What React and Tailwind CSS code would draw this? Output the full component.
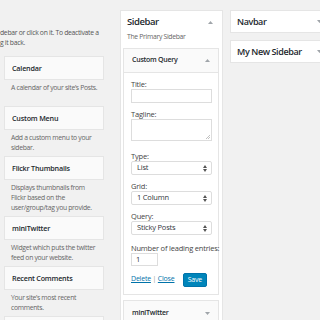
import React from "react";

function Up() {
  return (
    <svg width="5" height="3" viewBox="0 0 5 3" className="shrink-0">
      <path d="M0 3 L2.5 0 L5 3 Z" fill="#a0a5aa" />
    </svg>
  );
}
function Down() {
  return (
    <svg width="5" height="3" viewBox="0 0 5 3" className="shrink-0">
      <path d="M0 0 L2.5 3 L5 0 Z" fill="#a0a5aa" />
    </svg>
  );
}
function SelArrows() {
  return (
    <svg width="4" height="7" viewBox="0 0 4 7" className="shrink-0">
      <path d="M0 3 L2 0 L4 3 Z" fill="#555" />
      <path d="M0 4 L2 7 L4 4 Z" fill="#555" />
    </svg>
  );
}

const avail = [
  { t: "Calendar", d: ["A calendar of your site\u2019s Posts."] },
  { t: "Custom Menu", d: ["Add a custom menu to your", "sidebar."] },
  { t: "Flickr Thumbnails", d: ["Displays thumbnails from", "Flickr based on the", "user/group/tag you provide."] },
  { t: "miniTwitter", d: ["Widget which puts the twitter", "feed on your website."] },
  { t: "Recent Comments", d: ["Your site\u2019s most recent", "comments."] },
  { t: "", d: [""] },
];

function Select({ value }) {
  return (
    <div className="h-[14px] w-[81px] bg-white border border-[#ddd] rounded-[2px] flex items-center justify-between pl-[5px] pr-[4px] text-[7.5px] tracking-[-0.2px] text-[#32373c]">
      <span>{value}</span>
      <SelArrows />
    </div>
  );
}

export default function App() {
  return (
    <div className="w-[320px] h-[320px] overflow-hidden bg-[#f1f1f1] flex font-['Open_Sans',sans-serif] text-[#444]">
      {/* Available widgets */}
      <div className="w-[120px] shrink-0 flex flex-col pt-[28px]">
        <div className="text-[6.8px] tracking-[-0.3px] leading-[10px] text-[#555] whitespace-nowrap">
          <div>debar or click on it. To deactivate a</div>
          <div>g it back.</div>
        </div>
        <div className="mt-[8px] ml-[4px] w-[100px] flex flex-col">
          {avail.map((w, idx) => (
            <div key={idx} className="flex flex-col">
              <div className="h-[24px] bg-[#fafafa] border border-[#e5e5e5] flex items-center pl-[7px] text-[7.2px] tracking-[-0.2px] font-semibold text-[#23282d]">
                {w.t}
              </div>
              <div className="mt-[3px] mb-[3px] min-h-[20px] pl-[7px] text-[6.8px] tracking-[-0.3px] leading-[10px] text-[#666] whitespace-nowrap">
                {w.d.map((l, i) => (
                  <div key={i}>{l}</div>
                ))}
              </div>
            </div>
          ))}
        </div>
      </div>

      {/* Sidebar panel */}
      <div className="w-[103px] shrink-0 mt-[10px] h-[330px] bg-white border border-[#e5e5e5] flex flex-col">
        <div className="flex items-center justify-between pl-[6px] pr-[9px] pt-[4px] h-[18px]">
          <span className="text-[9.5px] tracking-[-0.45px] font-semibold text-[#23282d] leading-[14px]">Sidebar</span>
          <Up />
        </div>
        <div className="pl-[6px] mt-[3px] text-[6.8px] tracking-[-0.3px] leading-[10px] text-[#666]">The Primary Sidebar</div>
        <div className="mt-[6px] ml-[2px] w-[96px] border border-[#e5e5e5] flex flex-col">
          <div className="h-[24px] bg-[#fafafa] border-b border-[#e5e5e5] flex items-center justify-between pl-[8px] pr-[8px]">
            <span className="text-[7px] tracking-[-0.25px] font-semibold text-[#23282d]">Custom Query</span>
            <Up />
          </div>
          <div className="bg-white pl-[7px] pr-[6px] pt-[6px] pb-[7px] text-[7.5px] tracking-[-0.2px] text-[#444] flex flex-col">
            <div className="leading-[10px]">Title:</div>
            <div className="h-[14px] w-[81px] border border-[#ddd] bg-white" />
            <div className="mt-[6px] leading-[10px]">Tagline:</div>
            <div className="relative h-[22px] w-[81px] border border-[#ddd] bg-white">
              <svg width="4" height="4" viewBox="0 0 4 4" className="absolute right-[1px] bottom-[1px]">
                <path d="M4 0 L0 4 M4 2 L2 4" stroke="#999" strokeWidth="0.6" />
              </svg>
            </div>
            <div className="mt-[10px] leading-[10px]">Type:</div>
            <Select value="List" />
            <div className="mt-[6px] leading-[10px]">Grid:</div>
            <Select value="1 Column" />
            <div className="mt-[6px] leading-[10px]">Query:</div>
            <Select value="Sticky Posts" />
            <div className="mt-[8px] leading-[10px] whitespace-nowrap">Number of leading entries:</div>
            <div className="h-[13px] w-[27px] border border-[#ddd] bg-white flex items-center pl-[4px] text-[7.5px] text-[#32373c]">1</div>
            <div className="mt-[7px] flex items-center justify-between pr-[5px]">
              <span className="text-[7px] tracking-[-0.2px] whitespace-nowrap -mt-[2px]">
                <span className="text-[#0073aa] underline decoration-[0.5px] underline-offset-[1px]">Delete</span>
                <span className="text-[#999]"> | </span>
                <span className="text-[#0073aa] underline decoration-[0.5px] underline-offset-[1px]">Close</span>
              </span>
              <div className="h-[14px] px-[4px] bg-[#0085ba] border border-[#0073aa] rounded-[2px] text-white text-[7px] flex items-center">Save</div>
            </div>
          </div>
        </div>
        <div className="mt-[5px] ml-[2px] w-[96px] h-[26px] bg-[#fafafa] border border-[#e5e5e5] flex items-center justify-between pl-[8px] pr-[8px]">
          <span className="text-[7px] tracking-[-0.25px] font-semibold text-[#23282d]">miniTwitter</span>
          <Down />
        </div>
      </div>

      {/* Right column */}
      <div className="ml-[7px] pt-[10px] w-[100px] shrink-0 flex flex-col gap-[7px]">
        <div className="h-[23px] w-[95px] bg-white border border-[#e5e5e5] flex items-center justify-between pl-[6px] pr-[2px]">
          <span className="text-[9px] tracking-[-0.4px] font-semibold text-[#23282d]">Navbar</span>
          <Down />
        </div>
        <div className="h-[23px] w-[95px] bg-white border border-[#e5e5e5] flex items-center justify-between pl-[6px] pr-[2px]">
          <span className="text-[9px] tracking-[-0.4px] font-semibold text-[#23282d]">My New Sidebar</span>
          <Down />
        </div>
      </div>
    </div>
  );
}
